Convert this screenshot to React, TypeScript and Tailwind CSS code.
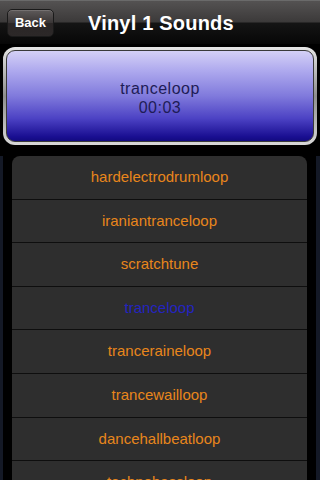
import React from 'react';

const sounds = [
  'hardelectrodrumloop',
  'iraniantranceloop',
  'scratchtune',
  'tranceloop',
  'tranceraineloop',
  'trancewailloop',
  'dancehallbeatloop',
  'technobassloop',
];

const current = 'tranceloop';

export default function App() {
  return (
    <div className="w-[320px] h-[480px] overflow-hidden bg-black font-['Liberation_Sans',Arial,sans-serif]">
      {/* nav bar */}
      <div className="h-[44px] flex items-center border-t border-[#6a6a6a] bg-[linear-gradient(#545252_0%,#3c3a3a_48%,#141414_52%,#070707_100%)]">
        <button className="ml-[7px] w-[47px] h-[28px] rounded-[5px] border border-[#1a1a1a] bg-[linear-gradient(#5e5a5a,#3a3636_50%,#2a2626_52%,#2c2828)] text-white text-[13px] font-bold shadow-[inset_0_1px_0_rgba(255,255,255,0.15)]">
          Back
        </button>
        <h1 className="ml-[34px] text-white text-[20px] font-bold tracking-[0.2px]">Vinyl 1 Sounds</h1>
      </div>

      {/* player */}
      <div className="px-[3px] pt-[3px] pb-[11px] bg-black">
        <div className="rounded-[12px] p-[3px] bg-[linear-gradient(#e6e6e6,#8e8e8e_50%,#d8d8d8)]">
          <div className="h-[92px] pt-[3px] rounded-[9px] border border-[#3a3a3a] flex flex-col items-center justify-center bg-[linear-gradient(#d4d0f6_0%,#aea9ee_22%,#807adc_50%,#4c42c4_75%,#1a0f92_95%,#120a80_100%)]">
            <div className="text-[16px] leading-[19px] text-[#1e1c56] tracking-[0.5px]">{current}</div>
            <div className="text-[16px] leading-[19px] text-[#1e1c56] tracking-[0.5px]">00:03</div>
          </div>
        </div>
      </div>

      {/* list */}
      <div className="flex bg-black">
        <div className="w-[3px] bg-[#141926]" />
        <div className="flex-1 px-[9px]">
          <div className="rounded-t-[8px] overflow-hidden">
            {sounds.map((s) => (
              <div
                key={s}
                className={`h-[43.6px] flex items-center justify-center bg-[#2e2e2e] border-b-[1.5px] border-[#0e0e0e] text-[15px] ${
                  s === current ? 'text-[#2424c0]' : 'text-[#e8861c]'
                }`}
              >
                {s}
              </div>
            ))}
          </div>
        </div>
        <div className="w-[4px] bg-[#141926]" />
      </div>
    </div>
  );
}
